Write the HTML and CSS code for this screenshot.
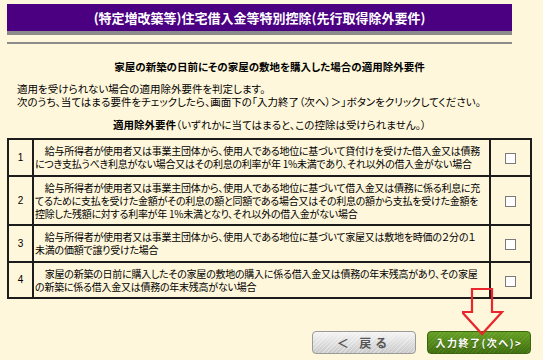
FILE: index.html
```html
<!DOCTYPE html>
<html lang="ja">
<head>
    <meta charset="UTF-8">
    <title>住宅借入金等特別控除</title>
    <link rel="stylesheet" href="styles.css">
</head>
<body>
    <div class="page">
        <div class="title-bar">(特定増改築等)住宅借入金等特別控除(先行取得除外要件)</div>
        <div class="rule"></div>

        <h2 class="heading">家屋の新築の日前にその家屋の敷地を購入した場合の適用除外要件</h2>

        <p class="lead">適用を受けられない場合の適用除外要件を判定します。<br>次のうち、当てはまる要件をチェックしたら、画面下の「入力終了（次へ）＞」ボタンをクリックしてください。</p>

        <p class="sub"><b>適用除外要件</b>（いずれかに当てはまると、この控除は受けられません。）</p>

        <table class="reqs">
            <colgroup>
                <col class="c-num">
                <col>
                <col class="c-chk">
            </colgroup>
            <tr>
                <td class="num">1</td>
                <td class="txt">　給与所得者が使用者又は事業主団体から、使用人である地位に基づいて貸付けを受けた借入金又は債務<br>につき支払うべき利息がない場合又はその利息の利率が年 1%未満であり、それ以外の借入金がない場合</td>
                <td class="chk"><input type="checkbox"></td>
            </tr>
            <tr>
                <td class="num">2</td>
                <td class="txt">　給与所得者が使用者又は事業主団体から、使用人である地位に基づいて借入金又は債務に係る利息に充<br>てるために支払を受けた金額がその利息の額と同額である場合又はその利息の額から支払を受けた金額を<br>控除した残額に対する利率が年 1%未満となり、それ以外の借入金がない場合</td>
                <td class="chk"><input type="checkbox"></td>
            </tr>
            <tr>
                <td class="num">3</td>
                <td class="txt">　給与所得者が使用者又は事業主団体から、使用人である地位に基づいて家屋又は敷地を時価の２分の１<br>未満の価額で譲り受けた場合</td>
                <td class="chk"><input type="checkbox"></td>
            </tr>
            <tr>
                <td class="num">4</td>
                <td class="txt">　家屋の新築の日前に購入したその家屋の敷地の購入に係る借入金又は債務の年末残高があり、その家屋<br>の新築に係る借入金又は債務の年末残高がない場合</td>
                <td class="chk"><input type="checkbox"></td>
            </tr>
        </table>

        <div class="buttons">
            <button class="btn back">＜ 戻る</button>
            <button class="btn next">入力終了(次へ)&gt;</button>
        </div>

        <!-- 赤い矢印 -->
        <svg class="arrow" width="42" height="48" viewBox="0 0 42 48">
            <polygon points="10,1 30,1 30,24 40,24 20,46 0,24 10,24" fill="none" stroke="#e8262b" stroke-width="2.2"/>
        </svg>
    </div>
</body>
</html>
```

FILE: styles.css
```css
html, body {
    margin: 0;
    background-color: #fff7db;
}
body {
    font-family: "Noto Sans CJK JP", sans-serif;
    font-size: 10.5px;
    color: #000;
    font-feature-settings: "palt";
}
.page {
    position: relative;
    width: 525px;
    padding: 4px 0 0 7px;
    height: 356px;
}
.title-bar {
    width: 505px;
    height: 27px;
    line-height: 27px;
    background-color: #4b0082;
    color: #fff;
    font-weight: bold;
    font-size: 13px;
    text-align: center;
    border-bottom: 4px solid #8c8c8c;
}
.rule {
    width: 505px;
    height: 2px;
    margin-top: 7px;
    background-color: #8c8c8c;
}
.heading {
    margin: 16px 0 0;
    font-size: 10.5px;
    line-height: 13px;
    text-align: center;
}
.lead {
    margin: 9px 0 0;
    padding-left: 10px;
    line-height: 13px;
}
.sub {
    margin: 10px 0 0;
    line-height: 13px;
    text-align: center;
}
.reqs {
    margin-top: 7px;
    width: 525px;
    table-layout: fixed;
    border-collapse: separate;
    border-spacing: 0;
    border: 1px solid #1c1c1c;
}
.c-num {
    width: 25px;
}
.c-chk {
    width: 41px;
}
.reqs td {
    border: 1px solid #1c1c1c;
    padding: 4px 1px 4.5px;
    line-height: 13px;
    vertical-align: middle;
    font-size: 10px;
}
.reqs .num {
    text-align: center;
    font-family: "Liberation Sans", sans-serif;
    font-size: 10px;
}
.reqs .txt {
    white-space: nowrap;
    overflow: hidden;
    letter-spacing: -0.25px;
}
.reqs .chk {
    text-align: center;
}
.chk input {
    appearance: none;
    -webkit-appearance: none;
    width: 11px;
    height: 11px;
    margin: 2px 0 0;
    border: 1px solid #7a7a7a;
    background-color: #fff;
    vertical-align: middle;
}
.buttons {
    display: flex;
    justify-content: flex-end;
    gap: 11px;
    margin-top: 32px;
    padding-right: 1px;
}
.btn {
    width: 104px;
    height: 23px;
    border-radius: 4px;
    font-family: "Noto Sans CJK JP", sans-serif;
    font-weight: bold;
    padding: 0;
}
.back {
    color: #555;
    font-size: 12px;
    letter-spacing: 4px;
    border: 1px solid #9a9a9a;
    background: repeating-linear-gradient(135deg, rgba(255,255,255,0.35) 0 1px, transparent 1px 3px),
                linear-gradient(#f4f4f4, #c9c9c9);
}
.next {
    color: #fff;
    font-size: 10px;
    letter-spacing: 1.5px;
    border: 1px solid #3b6410;
    background: repeating-linear-gradient(135deg, rgba(255,255,255,0.08) 0 1px, transparent 1px 3px),
                linear-gradient(#65a022, #3f6e0d);
    text-shadow: 0 1px 1px rgba(0,0,0,0.3);
}
.arrow {
    position: absolute;
    left: 462px;
    top: 288px;
}
```
